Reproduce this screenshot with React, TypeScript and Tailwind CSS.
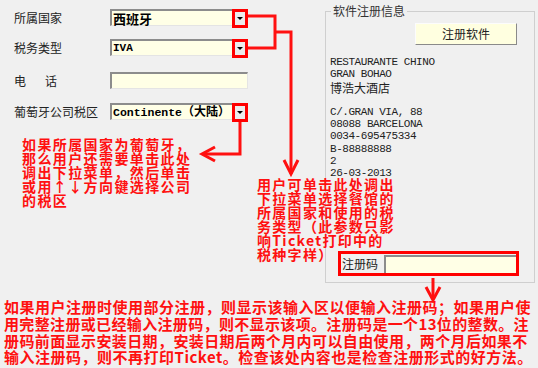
import React from "react";

const SANS = "font-['Noto_Sans_CJK_SC',sans-serif]";
const MONO = "font-['Liberation_Mono','Noto_Sans_CJK_SC',monospace]";

function Drop() {
  return (
    <div className="ml-auto w-[16px] h-[19px] -my-[2px] -mr-[1px] border-[3px] border-[#ff0000] bg-[#ececec] flex items-center justify-center">
      <div className="w-0 h-0 border-l-[3px] border-r-[3px] border-t-[3px] border-l-transparent border-r-transparent border-t-black" />
    </div>
  );
}

function Field({ children, drop }: { children?: React.ReactNode; drop?: boolean }) {
  return (
    <div className="w-[138px] h-[17px] bg-[#ffffe6] border-t-2 border-l-2 border-r border-b border-t-[#8c8c8c] border-l-[#8c8c8c] border-r-[#e4e4e4] border-b-[#e4e4e4] flex items-center pl-[1px]">
      {children}
      {drop ? <Drop /> : null}
    </div>
  );
}

function Row({ label, children, className }: { label: React.ReactNode; children: React.ReactNode; className?: string }) {
  return (
    <div className={"flex items-center h-[17px] " + (className ?? "")}>
      <div className={"w-[96px] text-[12px] text-[#222] " + SANS}>{label}</div>
      {children}
    </div>
  );
}

export default function App() {
  const red = "#ff1010";
  return (
    <div className="relative w-[538px] h-[368px] bg-[#f0f0f0] overflow-hidden">
      <div className="flex h-[290px]">
        {/* left form */}
        <div className="w-[325px] pl-[14px] pt-[9px] flex flex-col">
          <Row label="所属国家">
            <Field drop>
              <span className={"text-[13px] font-bold text-black leading-none " + SANS}>西班牙</span>
            </Field>
          </Row>
          <Row label="税务类型" className="mt-[13px]">
            <Field drop>
              <span className={"text-[11px] font-bold text-black leading-none " + MONO}>IVA</span>
            </Field>
          </Row>
          <Row
            label={
              <span className="flex">
                <span>电</span>
                <span className="ml-[19px]">话</span>
              </span>
            }
            className="mt-[16px]"
          >
            <Field />
          </Row>
          <Row label="葡萄牙公司税区" className="mt-[14px]">
            <Field drop>
              <span className={"text-[11.5px] font-bold text-black leading-none whitespace-nowrap " + MONO}>
                Continente<span className={"text-[12px] " + SANS}>（大陆）</span>
              </span>
            </Field>
          </Row>
        </div>

        {/* group box */}
        <div className="mt-[11px] w-[210px] h-[272px] border border-[#cfcfcf] flex flex-col">
          <div className={"-mt-[9px] ml-[5px] self-start px-[2px] bg-[#f0f0f0] text-[12px] leading-[16px] text-[#333] " + SANS}>
            软件注册信息
          </div>
          <div className="flex justify-end pr-[17px] mt-[4px]">
            <div className={"w-[102px] h-[22px] bg-[#ffffe0] border border-t-[#fcfcfc] border-l-[#fcfcfc] border-r-[#8a8a8a] border-b-[#8a8a8a] flex items-center justify-center text-[12px] text-[#222] " + SANS}>
              注册软件
            </div>
          </div>
          <div className={"pl-[4px] mt-[11px] text-[11px] tracking-[-0.45px] leading-[12.3px] text-[#222] " + MONO}>
            <div>RESTAURANTE CHINO</div>
            <div>GRAN BOHAO</div>
            <div className={"text-[12px] tracking-normal leading-[13px] " + SANS}>博浩大酒店</div>
            <div className="h-[12.3px]" />
            <div>C/.GRAN VIA, 88</div>
            <div>08088 BARCELONA</div>
            <div>0034-695475334</div>
            <div>B-88888888</div>
            <div>2</div>
            <div>26-03-2013</div>
          </div>
          <div className="mt-auto mb-[6px] ml-[12px] w-[181px] h-[25px] border-[3px] border-[#ff0000] flex items-center pl-[1px]">
            <span className={"text-[12px] text-[#222] w-[42px] " + SANS}>注册码</span>
            <div className="w-[133px] h-[18px] bg-[#ffffe6] border-t-2 border-l-2 border-t-[#8c8c8c] border-l-[#8c8c8c]" />
          </div>
        </div>
      </div>

      {/* bottom explanation */}
      <div className={"pl-[4px] mt-[9px] text-[15px] font-bold leading-[16.8px] whitespace-nowrap " + SANS} style={{ color: red }}>
        <div className="tracking-[0.5px]">如果用户注册时使用部分注册，则显示该输入区以便输入注册码；如果用户使</div>
        <div className="tracking-[0.35px]">用完整注册或已经输入注册码，则不显示该项。注册码是一个13位的整数。注</div>
        <div className="tracking-[0.4px]">册码前面显示安装日期，安装日期后两个月内可以自由使用，两个月后如果不</div>
        <div className="tracking-[0.5px]">输入注册码，则不再打印Ticket。检查该处内容也是检查注册形式的好方法。</div>
      </div>

      {/* overlay annotations */}
      <div className={"absolute left-[22px] top-[137px] text-[14px] tracking-[1.4px] font-bold leading-[14px] whitespace-nowrap " + SANS} style={{ color: red }}>
        <div>如果所属国家为葡萄牙，</div>
        <div>那么用户还需要单击此处</div>
        <div>调出下拉菜单，然后单击</div>
        <div>或用↑↓方向键选择公司</div>
        <div>的税区</div>
      </div>
      <div className={"absolute left-[257px] top-[177px] text-[14px] tracking-[1.3px] font-bold leading-[14px] whitespace-nowrap " + SANS} style={{ color: red }}>
        <div>用户可单击此处调出</div>
        <div>下拉菜单选择餐馆的</div>
        <div>所属国家和使用的税</div>
        <div>务类型（此参数只影</div>
        <div>响Ticket打印中的</div>
        <div>税种字样）</div>
      </div>

      <svg className="absolute left-0 top-0 pointer-events-none" width="538" height="368" viewBox="0 0 538 368" fill="none" stroke={red} strokeWidth="3" strokeLinejoin="miter">
        <polyline points="248,16 275,16 275,48 248,48" />
        <polyline points="275,32 291,32 291,174" />
        <polyline points="284,160 291,174 298,160" />
        <polyline points="240,122 240,154 203,154" />
        <polyline points="215,147 202,154 215,161" />
        <polyline points="433,278 433,299" />
        <polyline points="426,287 433,300 440,287" />
      </svg>
    </div>
  );
}
